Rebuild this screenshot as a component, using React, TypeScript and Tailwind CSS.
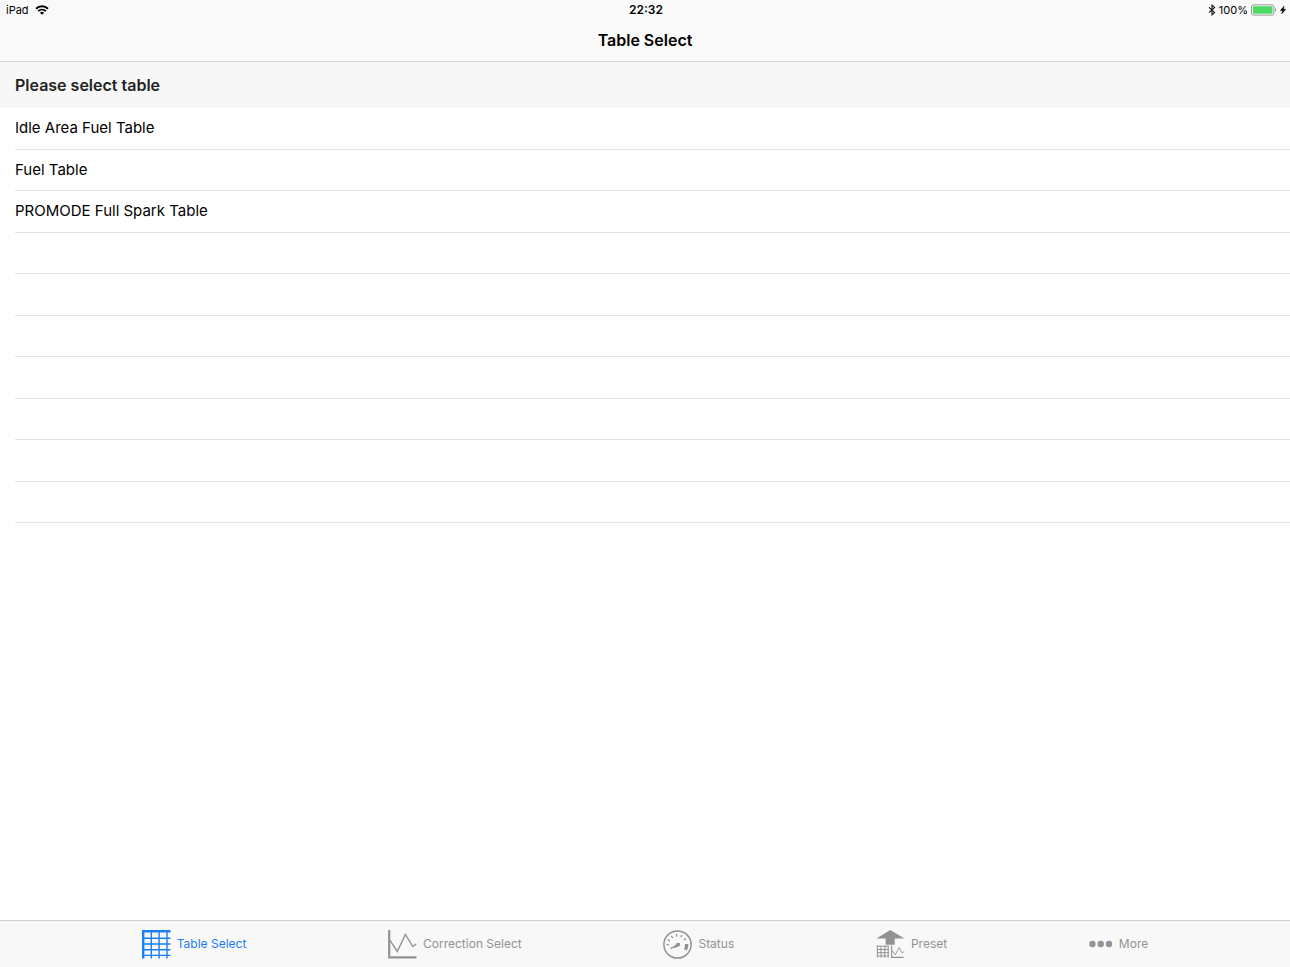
import { useState } from "react"
import type { ReactNode } from "react"

const tables = ["Idle Area Fuel Table", "Fuel Table", "PROMODE Full Spark Table"]
const emptyRows = 7

const WifiIcon = () => (
  <svg width="14" height="10" viewBox="0 0 14 10" fill="none" stroke="#000" strokeWidth="1.9" aria-hidden="true">
    <path d="M1 3.7a8.6 8.6 0 0 1 12 0" />
    <path d="M3.2 6.1a5.5 5.5 0 0 1 7.6 0" />
    <path d="M7 9.8 4.9 7.7a3 3 0 0 1 4.2 0z" fill="#000" stroke="none" />
  </svg>
)

const BluetoothIcon = () => (
  <svg width="8" height="12" viewBox="0 0 8 12" fill="none" stroke="#111" strokeWidth="1.1" aria-hidden="true">
    <path d="M1 3.3 6.6 8.4 4 10.8V1.2L6.6 3.6 1 8.7" />
  </svg>
)

const BatteryIcon = () => (
  <svg width="26" height="12" viewBox="0 0 26 12" aria-hidden="true">
    <rect x="0.5" y="0.9" width="22.4" height="10.2" rx="2" fill="#fff" stroke="#8c8c8c" strokeWidth="0.9" />
    <rect x="1.9" y="2.3" width="19.6" height="7.4" rx="0.8" fill="#4cd964" />
    <path d="M24 4.3c1.4.5 1.4 2.9 0 3.4z" fill="#8c8c8c" />
  </svg>
)

const BoltIcon = () => (
  <svg width="6" height="8" viewBox="0 0 6 8" fill="#000" stroke="#000" strokeWidth="0.4" aria-hidden="true">
    <path d="M4.2 0 .2 4.6h2.3L1.6 8l4.2-4.8H3.4z" />
  </svg>
)

const TableIcon = () => (
  <svg width="29" height="29" viewBox="0 0 29 29" fill="none" stroke="currentColor" aria-hidden="true">
    <path d="M0 1.2h28.5M1.2 0v28.5" strokeWidth="2.4" />
    <path d="M9.3 1v27.5M17.1 1v27.5M25 1v27.5M1 8.2h27.5M1 14h27.5M1 19.7h27.5M1 25.4h27.5" strokeWidth="1.4" />
  </svg>
)

const CorrectionIcon = () => (
  <svg width="29" height="29" viewBox="0 0 29 29" fill="none" stroke="currentColor" aria-hidden="true">
    <path d="M1.2 0v27.4h27.3" strokeWidth="2.2" />
    <path d="M2 10.3 9.3 21.5 17.4 4.4 24.8 16.5 28.3 14" strokeWidth="1.4" />
  </svg>
)

const StatusIcon = () => (
  <svg width="29" height="29" viewBox="0 0 29 29" fill="none" stroke="currentColor" aria-hidden="true">
    <circle cx="14.5" cy="14.5" r="13.6" strokeWidth="1.5" />
    <path d="M3.6 14.6h2.3M4.8 9.8l2 1.1M8.3 5.8l1.5 2M13.4 4.2l.3 2.5M18.8 4.9l-.9 2.3M23 8.4l-1.9 1.6" strokeWidth="1.3" />
    <path d="M7.6 18.6 16.7 13.8" strokeWidth="1.4" />
    <path d="M11.4 17.2 16.7 13.8" strokeWidth="2.2" />
    <circle cx="14.8" cy="14.7" r="2" fill="currentColor" stroke="none" />
    <path d="M22 14h3.4q.1 3.4-1.4 6.3l-2.8-.9q.8-2.7.8-5.4z" fill="currentColor" stroke="none" />
  </svg>
)

const PresetIcon = () => (
  <svg width="29" height="29" viewBox="0 0 29 29" fill="none" stroke="currentColor" aria-hidden="true">
    <path d="M14.3 0 28.3 8.4h-9.6v6.4H9.6V8.4H.3z" fill="currentColor" stroke="none" />
    <path d="M.8 16.2H13M1.4 15.7v12M5 16v11.7M8.8 16v11.7M12.2 16v11.7M1 19.5h12M1 22.7h12M1 26h12" strokeWidth="1" />
    <path d="M15.6 15.5v11.8h12" strokeWidth="1.2" />
    <path d="m16 20.3 3.3 4.4 3.8-7 3 5.2 1.7-1.2" strokeWidth="0.9" />
  </svg>
)

const MoreIcon = () => (
  <svg width="24" height="8" viewBox="0 0 24 8" fill="currentColor" aria-hidden="true">
    <circle cx="3.4" cy="4" r="3.2" />
    <circle cx="11.7" cy="4" r="3.2" />
    <circle cx="20" cy="4" r="3.2" />
  </svg>
)

const tabs: { label: string; icon: ReactNode }[] = [
  { label: "Table Select", icon: <TableIcon /> },
  { label: "Correction Select", icon: <CorrectionIcon /> },
  { label: "Status", icon: <StatusIcon /> },
  { label: "Preset", icon: <PresetIcon /> },
  { label: "More", icon: <MoreIcon /> },
]

const App = () => {
  const [active, setActive] = useState("Table Select")

  return (
    <div className="flex min-h-screen flex-col bg-white font-['Inter','Liberation_Sans',sans-serif] text-black">
      <header className="border-b border-[#d5d5d5] bg-[#f9f9f9]">
        <div className="grid h-5 grid-cols-3 items-center pr-1 pl-1.5 text-[11px] leading-5">
          <div className="flex items-center gap-1.5">
            <span>iPad</span>
            <WifiIcon />
          </div>
          <span className="text-center text-[12px] font-semibold">22:32</span>
          <div className="flex items-center justify-end gap-[3px]">
            <BluetoothIcon />
            <span className="flex items-center gap-[3px]">
              100%
              <BatteryIcon />
            </span>
            <BoltIcon />
          </div>
        </div>
        <h1 className="h-[41px] text-center text-[16px] leading-10 font-semibold">Table Select</h1>
      </header>

      <main className="flex-1">
        <h2 className="h-[46px] bg-[#f7f7f7] pl-[15px] text-[16px] leading-[46px] font-semibold text-[#232323]">
          Please select table
        </h2>
        <ul className="pl-[15px]">
          {tables.map((name) => (
            <li key={name} className="border-b border-[#e3e3e3] odd:h-[42px] even:h-[41px]">
              <button type="button" className="block h-10 w-full text-left text-[15px] leading-10">
                {name}
              </button>
            </li>
          ))}
          {Array.from({ length: emptyRows }, (_, i) => (
            <li key={i} aria-hidden="true" className="border-b border-[#e3e3e3] odd:h-[42px] even:h-[41px]" />
          ))}
        </ul>
      </main>

      <nav className="flex h-[47px] items-center justify-evenly border-t border-[#d0d0d0] bg-[#f8f8f8]">
        {tabs.map(({ label, icon }) => (
          <button
            key={label}
            type="button"
            onClick={() => setActive(label)}
            className={`flex items-center gap-1.5 text-[12px] leading-5 ${active === label ? "text-[#1a7ff0]" : "text-[#929292]"}`}
          >
            {icon}
            {label}
          </button>
        ))}
      </nav>
    </div>
  )
}

export default App
